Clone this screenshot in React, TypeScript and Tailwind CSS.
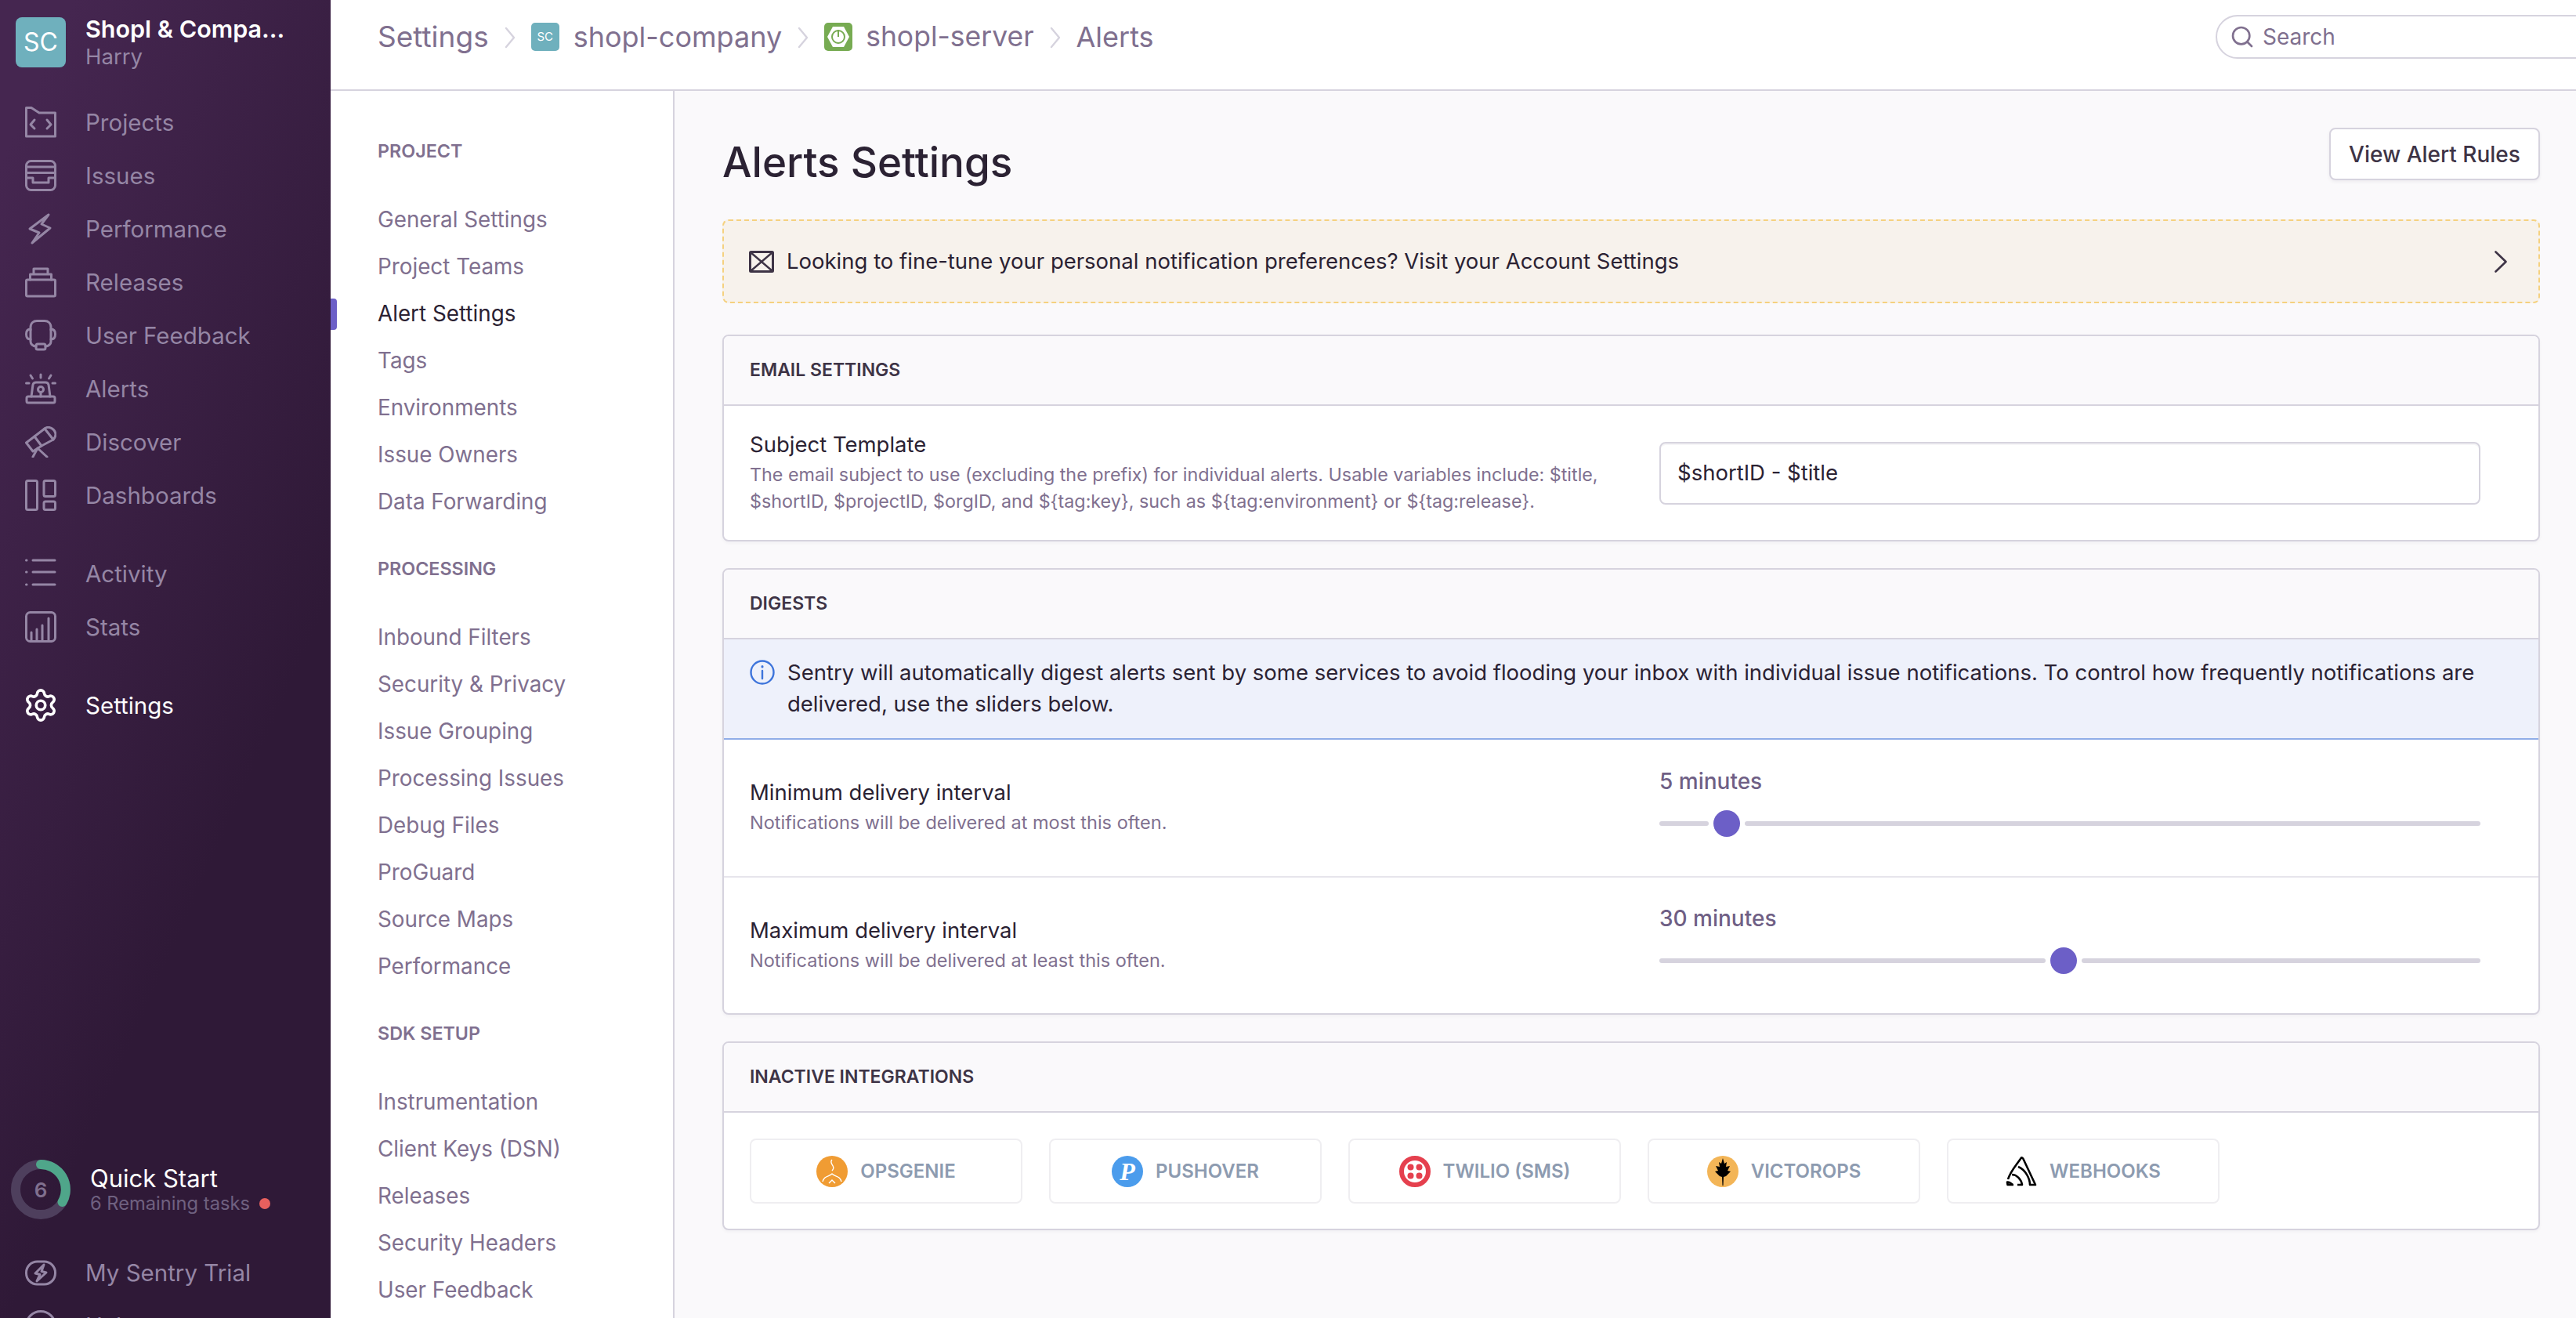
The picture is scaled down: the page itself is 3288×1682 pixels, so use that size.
import { Search, Settings } from "lucide-react";

const Stroke = ({ children, className }: { children: React.ReactNode; className?: string }) => (
  <svg
    viewBox="0 0 40 40"
    fill="none"
    stroke="currentColor"
    strokeWidth="3"
    strokeLinecap="round"
    strokeLinejoin="round"
    className={className ?? "w-10 h-10"}
  >
    {children}
  </svg>
);

const ProjectsIcon = () => (
  <Stroke>
    <path d="M1.5 38V1.5H8L18 8H38.5V38Z" />
    <path d="M12 17L7 23L12 28M28 17L33 23L28 28" />
  </Stroke>
);
const IssuesIcon = () => (
  <Stroke>
    <rect x="1.5" y="1.5" width="37" height="37" rx="6" />
    <path d="M1.5 9H38.5M1.5 16.5H38.5M1.5 16.5V23H10V29H30V23H38.5" />
  </Stroke>
);
const PerformanceIcon = () => (
  <Stroke>
    <path d="M30 2L6 20L18 25L9 38L32 19L21 14Z" />
  </Stroke>
);
const ReleasesIcon = () => (
  <Stroke>
    <rect x="1.5" y="17" width="37" height="21" rx="1.5" />
    <path d="M6.5 17V10H33.5V17M11 10V3H29V10" />
  </Stroke>
);
const FeedbackIcon = () => (
  <Stroke>
    <path d="M7 13V10C7 4 11 1.5 15 1.5H25C29 1.5 33 4 33 10V13" />
    <path d="M7 12C3 12 1.5 15 1.5 18.5C1.5 22 3 25 7 25Z" />
    <path d="M33 12C37 12 38.5 15 38.5 18.5C38.5 22 37 25 33 25Z" />
    <path d="M7 25V28C7 31 10 34 14 34M33 25V28C33 31 30 34 26 34" />
    <rect x="14" y="31" width="12" height="7" rx="2" />
  </Stroke>
);
const AlertsIcon = () => (
  <Stroke>
    <rect x="2" y="30" width="36" height="8" rx="2" />
    <path d="M8 30L10 15C10.5 13 12 12 14 12H26C28 12 29.5 13 30 15L32 30" />
    <circle cx="20" cy="21" r="3.5" />
    <path d="M20 25V30M20 2V6M7 3L9.5 7M33 3L30.5 7M1.5 13H5M35 13H38.5" />
  </Stroke>
);
const DiscoverIcon = () => (
  <Stroke>
    <path d="M1.5 21L12 13L21 25L10 32Z" />
    <path d="M12 13L25 3L36 17L21 25" />
    <path d="M25 3C30 -1 38 3 39 10C39 13 37 16 36 17" />
    <path d="M16 28L10 39M16 28L28 39" />
  </Stroke>
);
const DashboardsIcon = () => (
  <Stroke>
    <rect x="1.5" y="1.5" width="14" height="37" rx="2" />
    <rect x="24" y="1.5" width="14.5" height="20" rx="2" />
    <rect x="24" y="28" width="14.5" height="10.5" rx="2" />
  </Stroke>
);
const ActivityIcon = () => (
  <Stroke>
    <path d="M10 3H38M10 18H38M10 34H38" />
    <path d="M1.5 3H2M1.5 18H2M1.5 34H2" />
  </Stroke>
);
const StatsIcon = () => (
  <Stroke>
    <rect x="1.5" y="1.5" width="37" height="37" rx="5" />
    <path d="M8 38V27M15 38V23M22 38V18M30 38V9" />
  </Stroke>
);
const TrialIcon = () => (
  <Stroke>
    <rect x="1.5" y="6" width="37" height="29" rx="14" />
    <path d="M24 10L13 21L19 22.5L15 31L27 20L21 18.5Z" />
  </Stroke>
);
const HelpIcon = () => (
  <Stroke>
    <circle cx="20" cy="20" r="18.5" />
  </Stroke>
);

const primaryNav = [
  [
    { label: "Projects", Icon: ProjectsIcon },
    { label: "Issues", Icon: IssuesIcon },
    { label: "Performance", Icon: PerformanceIcon },
    { label: "Releases", Icon: ReleasesIcon },
    { label: "User Feedback", Icon: FeedbackIcon },
    { label: "Alerts", Icon: AlertsIcon },
    { label: "Discover", Icon: DiscoverIcon },
    { label: "Dashboards", Icon: DashboardsIcon },
  ],
  [
    { label: "Activity", Icon: ActivityIcon },
    { label: "Stats", Icon: StatsIcon },
  ],
];

const NavRow = ({ label, icon, active }: { label: string; icon: React.ReactNode; active?: boolean }) => (
  <div className={`flex items-center h-[68px] pl-[32px] gap-[37px] text-[29.5px] ${active ? "text-white" : "text-[#9586a5]"}`}>
    {icon}
    <span>{label}</span>
  </div>
);

const Sidebar = () => (
  <aside className="w-[422px] h-[1682px] shrink-0 overflow-hidden bg-[linear-gradient(294deg,#2f1937_35%,#452650_92%)]">
    <div className="flex flex-col h-[1726px]">
      <div className="flex items-start h-[86px] pt-[22px] pl-[20px] gap-[25px]">
        <div className="w-[64px] h-[64px] rounded-[8px] bg-[#6fb0bd] flex items-center justify-center text-white text-[32px]">
          SC
        </div>
        <div className="flex flex-col">
          <span className="text-white text-[30.5px] font-semibold leading-[30px]">Shopl &amp; Compa...</span>
          <span className="mt-[3px] text-[#9586a5] text-[27.5px] leading-[34px]">Harry</span>
        </div>
      </div>
      <nav className="mt-[36px] flex flex-col gap-[32px]">
        {primaryNav.map((group, i) => (
          <div key={i}>
            {group.map(({ label, Icon }) => (
              <NavRow key={label} label={label} icon={<Icon />} />
            ))}
          </div>
        ))}
        <NavRow label="Settings" active icon={<Settings className="w-[46px] h-[46px] -mx-[3px]" strokeWidth={1.9} />} />
      </nav>
      <div className="mt-auto">
        <div className="flex items-center pl-[14px] gap-[25px] h-[76px] mb-[34px]">
          <div className="relative w-[76px] h-[76px]">
            <svg viewBox="0 0 76 76" className="w-[76px] h-[76px]" fill="none">
              <circle cx="38" cy="38" r="32" stroke="#4e3f5d" strokeWidth="12" />
              <path d="M38 6A32 32 0 0 1 65.5 54" stroke="#4fa68a" strokeWidth="12" strokeLinecap="round" />
            </svg>
            <span className="absolute inset-0 flex items-center justify-center text-[#80708f] text-[26px] font-semibold">6</span>
          </div>
          <div className="flex flex-col">
            <span className="text-white text-[31px] leading-[36px]">Quick Start</span>
            <span className="flex items-center gap-[12px] text-[#6f6180] text-[23.7px] leading-[28px]">
              6 Remaining tasks
              <span className="w-[14px] h-[14px] rounded-full bg-[#e8605e]" />
            </span>
          </div>
        </div>
        <NavRow label="My Sentry Trial" icon={<TrialIcon />} />
        <NavRow label="Help" icon={<HelpIcon />} />
      </div>
    </div>
  </aside>
);

const settingsNav = [
  {
    title: "Project",
    items: ["General Settings", "Project Teams", "Alert Settings", "Tags", "Environments", "Issue Owners", "Data Forwarding"],
  },
  {
    title: "Processing",
    items: ["Inbound Filters", "Security & Privacy", "Issue Grouping", "Processing Issues", "Debug Files", "ProGuard", "Source Maps", "Performance"],
  },
  {
    title: "SDK Setup",
    items: ["Instrumentation", "Client Keys (DSN)", "Releases", "Security Headers", "User Feedback"],
  },
];

const SettingsNav = () => (
  <nav className="w-[439px] shrink-0 bg-white border-r-2 border-[#d6d3de] pl-[60px] pt-[57px]">
    {settingsNav.map((group, i) => (
      <div key={group.title} className={i > 0 ? "mt-[35px]" : ""}>
        <h3 className="h-[40px] mb-[38px] flex items-center text-[23.3px] font-semibold uppercase text-[#80708f]">{group.title}</h3>
        {group.items.map((item) => {
          const active = item === "Alert Settings";
          return (
            <div key={item} className={`relative h-[60px] flex items-center text-[27.8px] ${active ? "text-[#2b2233]" : "text-[#80708f]"}`}>
              {active && <span className="absolute left-[-60px] top-[10px] w-[8px] h-[40px] rounded-r-[4px] bg-[#6c5fc7]" />}
              {item}
            </div>
          );
        })}
      </div>
    ))}
  </nav>
);

const Crumb = () => (
  <svg viewBox="0 0 14 32" className="w-[14px] h-[32px] mx-[20px] mt-[2px] text-[#d6d3de]" fill="none" stroke="currentColor" strokeWidth="2.4" strokeLinecap="round" strokeLinejoin="round">
    <path d="M2 4L12 16L2 28" />
  </svg>
);

const TopBar = () => (
  <header className="flex items-center h-[116px] pb-[20px] shrink-0 bg-white border-b-2 border-[#d6d3de] pl-[60px] text-[36px] text-[#80708f] overflow-hidden">
    <span className="text-[37px]">Settings</span>
    <Crumb />
    <div className="w-[36px] h-[36px] rounded-[5px] bg-[#6fb0bd] text-white text-[15px] flex items-center justify-center mr-[18px]">SC</div>
    <span>shopl-company</span>
    <Crumb />
    <div className="w-[36px] h-[36px] rounded-[5px] bg-[#77ab52] flex items-center justify-center mr-[17px]">
      <svg viewBox="0 0 36 36" className="w-[36px] h-[36px]">
        <path d="M11 5H25L32 18L25 31H11L4 18Z" fill="#fff" />
        <circle cx="18" cy="18" r="8" fill="none" stroke="#77ab52" strokeWidth="2" />
        <path d="M18 9V18" stroke="#77ab52" strokeWidth="2" />
      </svg>
    </div>
    <span className="text-[35.5px]">shopl-server</span>
    <Crumb />
    <span>Alerts</span>
    <div className="ml-auto mr-[-60px] w-[520px] shrink-0 h-[56px] rounded-[28px] border-2 border-[#d6d3de] flex items-center pl-[16px] gap-[10px] text-[28px]">
      <Search className="w-[32px] h-[32px]" strokeWidth={2} />
      Search
    </div>
  </header>
);

const Panel = ({ title, children }: { title: string; children: React.ReactNode }) => (
  <section className="bg-white border-2 border-[#d6d3de] rounded-[8px] shadow-[0_2px_4px_rgba(37,11,54,0.04)] mb-[34px] overflow-hidden">
    <div className="h-[87px] box-content border-b-2 border-[#d6d3de] bg-[#faf9fb] flex items-center pl-[33px] text-[23px] font-semibold uppercase text-[#3e3446]">
      {title}
    </div>
    {children}
  </section>
);

const FieldLabel = ({ label, children, helpSize }: { label: string; children: React.ReactNode; helpSize: string }) => (
  <div className="flex-1 mt-[-2px]">
    <div className="text-[27.5px] leading-[36px] text-[#2b2233]">{label}</div>
    <div className={`mt-[4px] leading-[34px] text-[#80708f] ${helpSize}`}>{children}</div>
  </div>
);

const SliderRow = ({ label, help, value, offset, last }: { label: string; help: string; value: string; offset: string; last?: boolean }) => (
  <div className={`flex items-center pl-[33px] pr-[74px] ${last ? "h-[173px]" : "h-[176px] border-b-2 border-[#e7e5ec]"}`}>
    <FieldLabel label={label} helpSize="text-[23.5px]">{help}</FieldLabel>
    <div className="w-[1048px] shrink-0 pb-[16px]">
      <div className="h-[36px] leading-[36px] mb-[19px] text-[28px] font-medium text-[#6f5f85]">{value}</div>
      <div className="flex items-center gap-[6px] h-[34px]">
        <div className={`h-[6px] rounded-full bg-[#d6d3de] ${offset}`} />
        <div className="w-[34px] h-[34px] rounded-full bg-[#6c5fc7]" />
        <div className="flex-1 h-[6px] rounded-full bg-[#d6d3de]" />
      </div>
    </div>
  </div>
);

const integrations = [
  {
    name: "OpsGenie",
    logo: (
      <svg viewBox="0 0 40 40" className="w-10 h-10">
        <circle cx="20" cy="20" r="20" fill="#f09c33" />
        <path d="M20 5C15 10 26 13 20 19M8 33C10 25 16 27 20 23C24 27 30 25 32 33M16 35L20 31L24 35" fill="none" stroke="#fff" strokeWidth="1.4" />
      </svg>
    ),
  },
  {
    name: "Pushover",
    logo: (
      <div className="w-10 h-10 rounded-full bg-[#4b9cec] flex items-center justify-center text-white italic text-[32px] font-['Liberation_Serif',serif]">
        P
      </div>
    ),
  },
  {
    name: "Twilio (SMS)",
    logo: (
      <svg viewBox="0 0 40 40" className="w-10 h-10">
        <circle cx="20" cy="20" r="17" fill="#fff" stroke="#e5404e" strokeWidth="6" />
        <circle cx="14.5" cy="14.5" r="4" fill="#e5404e" />
        <circle cx="25.5" cy="14.5" r="4" fill="#e5404e" />
        <circle cx="14.5" cy="25.5" r="4" fill="#e5404e" />
        <circle cx="25.5" cy="25.5" r="4" fill="#e5404e" />
      </svg>
    ),
  },
  {
    name: "VictorOps",
    logo: (
      <svg viewBox="0 0 40 40" className="w-10 h-10">
        <circle cx="20" cy="20" r="20" fill="#f3b557" />
        <path d="M20 3L22 10L25 8L24 14L29 13L26 19L30 20L24 26L21 27L20.5 38H19.5L19 27L16 26L10 20L14 19L11 13L16 14L15 8L18 10Z" fill="#000" />
      </svg>
    ),
  },
  {
    name: "WebHooks",
    logo: (
      <svg viewBox="0 0 40 40" className="w-10 h-10" fill="none" stroke="#000" strokeWidth="2.6" strokeLinejoin="round">
        <path d="M10 37H2.5L2 33.5C5 33 8 36 9 37" />
        <path d="M3 30C6 20 12 14 20 2.5C21 2 22 3 22.5 4L38 37H31C31 30 26 18 16 14" />
        <path d="M8 24C14 24 20 30 21 37H15" />
      </svg>
    ),
  },
];

const MailIcon = () => (
  <svg viewBox="0 0 32 32" className="w-[32px] h-[32px] shrink-0 text-[#3e3446]" fill="none" stroke="currentColor" strokeWidth="3">
    <rect x="1.5" y="3.5" width="29" height="25" rx="1" />
    <path d="M2 4L30 28M30 4L2 28" strokeWidth="2.4" />
  </svg>
);

const InfoIcon = () => (
  <svg viewBox="0 0 32 32" className="w-[32px] h-[32px] shrink-0 text-[#3d74db]" fill="none" stroke="currentColor" strokeWidth="2.4" strokeLinecap="round">
    <circle cx="16" cy="16" r="14.5" />
    <path d="M16 14V24" />
    <path d="M16 8.5V9" strokeWidth="3" />
  </svg>
);

const Content = () => (
  <main className="flex-1 bg-[#faf9fb] pl-[61px] pr-[46px] pt-[47px] overflow-hidden">
    <div className="flex items-start justify-between mb-[42px]">
      <h1 className="mt-[13px] text-[53px] leading-[62px] font-medium text-[#2b2233]">Alerts Settings</h1>
      <button className="w-[269px] h-[67px] bg-white border-2 border-[#d6d3de] rounded-[8px] shadow-[0_2px_4px_rgba(37,11,54,0.06)] text-[28px] font-medium text-[#3e3446]">
        View Alert Rules
      </button>
    </div>

    <div className="flex items-center h-[107px] mb-[40px] pl-[32px] pr-[40px] gap-[16px] bg-[#f7f2ec] border-2 border-dashed border-[#f5d17f] rounded-[8px] text-[27.5px] text-[#2b2233]">
      <MailIcon />
      <span className="flex-1">Looking to fine-tune your personal notification preferences? Visit your Account Settings</span>
      <svg viewBox="0 0 16 28" className="w-[16px] h-[28px] text-[#3e3446]" fill="none" stroke="currentColor" strokeWidth="2.6" strokeLinecap="round" strokeLinejoin="round">
        <path d="M1.5 1.5L14.5 14L1.5 26.5" />
      </svg>
    </div>

    <Panel title="Email Settings">
      <div className="flex items-center pl-[33px] pr-[74px] h-[171px]">
        <FieldLabel label="Subject Template" helpSize="text-[23.3px]">
          The email subject to use (excluding the prefix) for individual alerts. Usable variables include: $title,
          <br />
          $shortID, $projectID, $orgID, and {"${tag:key}"}, such as {"${tag:environment}"} or {"${tag:release}"}.
        </FieldLabel>
        <div className="w-[1048px] h-[80px] shrink-0 border-2 border-[#d6d3de] rounded-[8px] flex items-center pl-[21px] text-[27.5px] text-[#2b2233] shadow-[inset_0_2px_0_rgba(37,11,54,0.04)]">
          $shortID - $title
        </div>
      </div>
    </Panel>

    <Panel title="Digests">
      <div className="flex gap-[16px] h-[128px] pl-[33px] pr-[60px] pt-[22px] bg-[#eef1fb] border-b-2 border-[#90ade8] text-[27.5px] leading-[40px] text-[#2b2233]">
        <span className="pt-[4px]"><InfoIcon /></span>
        <span>
          Sentry will automatically digest alerts sent by some services to avoid flooding your inbox with individual issue notifications. To control how frequently notifications are delivered, use the sliders below.
        </span>
      </div>
      <SliderRow label="Minimum delivery interval" help="Notifications will be delivered at most this often." value="5 minutes" offset="w-[63px]" />
      <SliderRow label="Maximum delivery interval" help="Notifications will be delivered at least this often." value="30 minutes" offset="w-[493px]" last />
    </Panel>

    <Panel title="Inactive Integrations">
      <div className="flex gap-[34px] pl-[33px] pt-[33px] h-[148px]">
        {integrations.map((item) => (
          <div key={item.name} className="w-[348px] h-[83px] border-2 border-[#efeef1] rounded-[8px] flex items-center justify-center gap-[16px] text-[24px] font-semibold uppercase text-[#8d9bb0]">
            {item.logo}
            {item.name}
          </div>
        ))}
      </div>
    </Panel>
  </main>
);

export default function App() {
  return (
    <div className="flex w-[3288px] h-[1682px] overflow-hidden font-['Inter',sans-serif]">
      <Sidebar />
      <div className="flex-1 min-w-0 flex flex-col">
        <TopBar />
        <div className="flex flex-1 min-h-0">
          <SettingsNav />
          <Content />
        </div>
      </div>
    </div>
  );
}
